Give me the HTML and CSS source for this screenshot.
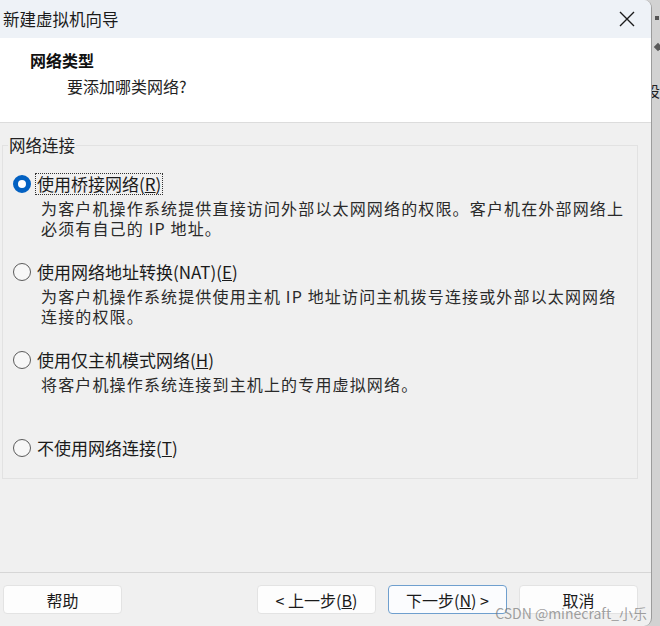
FILE: index.html
```html
<!DOCTYPE html>
<html lang="zh-CN">
<head>
<meta charset="utf-8">
<title>新建虚拟机向导</title>
<link rel="stylesheet" href="styles.css">
</head>
<body>
<div class="desktop">
  <div class="window">
    <div class="titlebar">
      <span class="title">新建虚拟机向导</span>
      <svg class="close" width="16" height="16" viewBox="0 0 16 16" aria-hidden="true">
        <path d="M1 1 L15 15 M15 1 L1 15" stroke="#1b1b1b" stroke-width="1.4" fill="none"/>
      </svg>
    </div>
    <div class="header">
      <div class="h-title">网络类型</div>
      <div class="h-sub">要添加哪类网络?</div>
    </div>
    <div class="content">
      <fieldset class="group">
        <legend class="group-label">网络连接</legend>
        <div class="option">
          <div class="radio-row">
            <span class="radio checked"></span>
            <span class="label focused">使用桥接网络(<u>R</u>)</span>
          </div>
          <div class="desc first">为客户机操作系统提供直接访问外部以太网网络的权限。客户机在外部网络上</div>
          <div class="desc">必须有自己的 IP 地址。</div>
        </div>
        <div class="option">
          <div class="radio-row">
            <span class="radio"></span>
            <span class="label">使用网络地址转换(NAT)(<u>E</u>)</span>
          </div>
          <div class="desc first">为客户机操作系统提供使用主机 IP 地址访问主机拨号连接或外部以太网网络</div>
          <div class="desc">连接的权限。</div>
        </div>
        <div class="option">
          <div class="radio-row">
            <span class="radio"></span>
            <span class="label">使用仅主机模式网络(<u>H</u>)</span>
          </div>
          <div class="desc first">将客户机操作系统连接到主机上的专用虚拟网络。</div>
        </div>
        <div class="option last">
          <div class="radio-row">
            <span class="radio"></span>
            <span class="label">不使用网络连接(<u>T</u>)</span>
          </div>
        </div>
      </fieldset>
    </div>
    <div class="footer">
      <button class="btn">帮助</button>
      <div class="btn-group">
        <button class="btn">&lt; 上一步(<u>B</u>)</button>
        <button class="btn default">下一步(<u>N</u>) &gt;</button>
        <button class="btn">取消</button>
      </div>
    </div>
    <div class="watermark">CSDN @minecraft_小乐</div>
  </div>
  <div class="behind">
    <span class="b-square"></span>
    <span class="b-diamond"></span>
    <span class="b-text">设</span>
  </div>
</div>
</body>
</html>
```

FILE: styles.css
```css
* { box-sizing: border-box; }
html, body {
  margin: 0;
  padding: 0;
  width: 660px;
  height: 626px;
  overflow: hidden;
  font-family: "Noto Sans CJK SC", "Noto Sans", sans-serif;
  color: #1a1a1a;
}
.desktop {
  display: flex;
  width: 660px;
  height: 626px;
  background: #d2d2d2;
}
.window {
  position: relative;
  width: 652px;
  height: 626px;
  display: flex;
  flex-direction: column;
  background: #f0f0f0;
  border-right: 1px solid #9c9c9c;
  border-radius: 0 8px 8px 0;
  overflow: hidden;
  flex: none;
}
.titlebar {
  height: 38px;
  flex: none;
  background: #eef2f7;
  display: flex;
  align-items: center;
  justify-content: space-between;
  padding: 0 16px 0 3px;
}
.title {
  font-size: 16.5px;
  line-height: 22px;
  color: #1a1a1a;
}
.close { display: block; }
.header {
  height: 85px;
  flex: none;
  background: #ffffff;
  border-bottom: 1px solid #dcdcdc;
  padding-top: 12px;
}
.h-title {
  padding-left: 30px;
  font-size: 16px;
  font-weight: 700;
  line-height: 20px;
  color: #111;
}
.h-sub {
  padding-left: 67px;
  margin-top: 6px;
  font-size: 16px;
  line-height: 20px;
  color: #222;
}
.content {
  flex: 1;
  padding: 12px 13px 0 2px;
}
.group {
  margin: 0;
  padding: 18px 10px 19px 10px;
  border: 1px solid #e2e2e2;
  min-width: 0;
}
.group-label {
  margin-left: -5px;
  padding: 0 1px;
  font-size: 16.5px;
  line-height: 20px;
  color: #222;
}
.option {
  height: 88px;
}
.option.last { height: auto; }
.radio-row {
  display: flex;
  align-items: center;
  height: 22px;
}
.radio {
  width: 18px;
  height: 18px;
  border-radius: 50%;
  border: 1px solid #5b5b5b;
  background: #f7f7f7;
  flex: none;
  margin-right: 4px;
}
.radio.checked {
  border: 5px solid #0361c2;
  background: #ffffff;
}
.label {
  font-size: 17px;
  line-height: 20px;
  padding: 0 1px;
  border: 1px solid transparent;
  color: #1a1a1a;
}
.label.focused { border: 1px dotted #333; }
.desc {
  padding-left: 28px;
  font-size: 16px;
  line-height: 20px;
  letter-spacing: 1.15px;
  color: #2a2a2a;
  white-space: nowrap;
}
.desc.first { margin-top: 3px; }
.footer {
  height: 54px;
  flex: none;
  border-top: 1px solid #d6d6d6;
  display: flex;
  justify-content: space-between;
  align-items: flex-start;
  padding: 12px 13px 0 3px;
}
.btn-group {
  display: flex;
  gap: 12px;
}
.btn {
  width: 119px;
  height: 29px;
  background: #fdfdfd;
  border: 1px solid #e3e3e3;
  border-radius: 4px;
  font-family: "Noto Sans CJK SC", "Noto Sans", sans-serif;
  font-size: 16px;
  line-height: 20px;
  color: #1a1a1a;
  padding: 0;
}
.btn.default {
  border: 1px solid #6f9fce;
  background: #fbfcfe;
}
.watermark {
  position: absolute;
  right: 4px;
  bottom: 5px;
  font-size: 14px;
  line-height: 16px;
  color: rgba(120, 120, 120, 0.7);
  white-space: nowrap;
}
.behind {
  flex: 1;
  overflow: hidden;
  display: flex;
  flex-direction: column;
  align-items: flex-start;
  padding-top: 16px;
}
.b-square {
  width: 4px;
  height: 4px;
  background: #555;
  margin-left: 3px;
}
.b-diamond {
  width: 6px;
  height: 6px;
  background: #5a5a5a;
  transform: rotate(45deg);
  margin-top: 24px;
  margin-left: 3px;
}
.b-text {
  margin-top: 32px;
  margin-left: -7px;
  font-size: 15px;
  line-height: 18px;
  color: #222;
}
```
